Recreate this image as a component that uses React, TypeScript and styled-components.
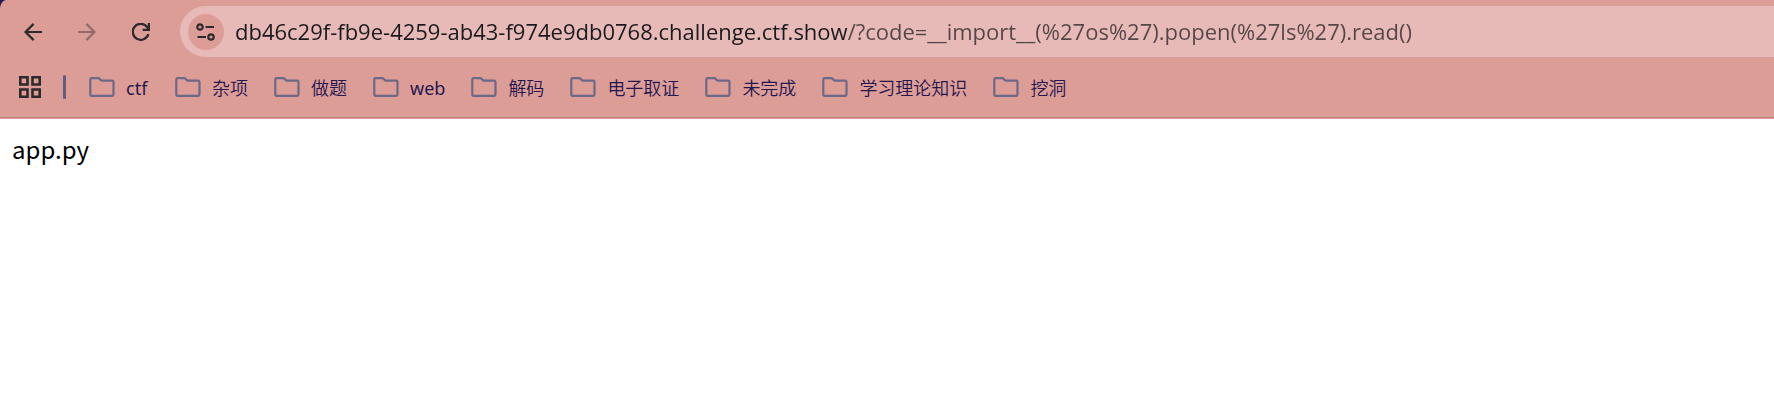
import React, { useState } from "react";
import styled, { createGlobalStyle } from "styled-components";

const GlobalStyle = createGlobalStyle`
  * { box-sizing: border-box; }
  html { background: #fff; }
  body { margin: 0; }
`;

const Frame = styled.div`
  background: #241c56;
`;

const Chrome = styled.header`
  background: #dd9d97;
  border-top-left-radius: 6px 9px;
  border-bottom: 1px solid #e09f9a;
  overflow: hidden;
`;

const Toolbar = styled.div`
  display: flex;
  align-items: center;
  padding: 6px 0 0 9px;
`;

const NavButtons = styled.nav`
  display: flex;
  gap: 6px;
  margin-right: 15px;
`;

const IconButton = styled.button`
  display: grid;
  place-items: center;
  width: 48px;
  height: 48px;
  padding: 0;
  border: 0;
  border-radius: 50%;
  background: transparent;
  color: #2c2a2d;
  &:disabled { color: #926b6a; }
`;

const AddressBar = styled.form`
  flex: 1;
  display: flex;
  align-items: center;
  gap: 11px;
  height: 51px;
  padding-left: 8px;
  border-radius: 26px 0 0 26px;
  background: #e7bab7;
`;

const SiteButton = styled(IconButton)`
  flex: none;
  width: 36px;
  height: 36px;
  background: #dd9d97;
`;

const Address = styled.input<{ $host: number }>`
  flex: 1;
  min-width: 0;
  height: 40px;
  padding: 0 0 2px;
  border: 0;
  outline: 0;
  font: 22px/30px "Open Sans", "Noto Sans CJK SC", sans-serif;
  color: transparent;
  caret-color: #1a1a1e;
  background: linear-gradient(to right, #1a1a1e ${(p) => p.$host}px, #544648 ${(p) => p.$host}px);
  background-clip: text;
  -webkit-background-clip: text;
`;

const Bookmarks = styled.nav`
  display: flex;
  align-items: center;
  height: 60px;
  padding-left: 18px;
`;

const AppsButton = styled(IconButton)`
  width: 24px;
  height: 24px;
`;

const Divider = styled.span`
  width: 3px;
  height: 24px;
  margin: 0 23px 0 21px;
  border-radius: 2px;
  background: #625b82;
`;

const FolderList = styled.div`
  display: flex;
  gap: 26px;
`;

const Folder = styled.button`
  display: flex;
  align-items: center;
  gap: 11px;
  min-width: 60px;
  padding: 0;
  border: 0;
  background: transparent;
  color: #231650;
  font: 18px/26px "Noto Sans", "Noto Sans CJK SC", sans-serif;
  white-space: nowrap;
  svg { color: #6b6888; }
  &:lang(zh) { font-weight: 350; }
`;

const FolderName = styled.span`
  padding-top: 2px;
`;

const Edge = styled.div`
  height: 1px;
  background: #bd7f7d;
`;

const Page = styled.main`
  padding: 10px 12px;
  background: #fff;
  color: #000;
  font: 24px/40px "Noto Sans CJK SC", sans-serif;
`;

const folders = [
  { name: "ctf", lang: "en" },
  { name: "杂项", lang: "zh" },
  { name: "做题", lang: "zh" },
  { name: "web", lang: "en" },
  { name: "解码", lang: "zh" },
  { name: "电子取证", lang: "zh" },
  { name: "未完成", lang: "zh" },
  { name: "学习理论知识", lang: "zh" },
  { name: "挖洞", lang: "zh" },
];

const BackIcon = () => (
  <svg width="18" height="18" viewBox="0 0 18 18" fill="none" stroke="currentColor" strokeWidth="2.2">
    <path d="M18 9H2M9.6 .9 1.5 9l8.1 8.1" />
  </svg>
);

const ForwardIcon = () => (
  <svg width="18" height="18" viewBox="0 0 18 18" fill="none" stroke="currentColor" strokeWidth="2.2">
    <path d="M0 9h16M8.4 .9 16.5 9l-8.1 8.1" />
  </svg>
);

const ReloadIcon = () => (
  <svg width="18" height="18" viewBox="0 0 18 18" fill="none" stroke="currentColor" strokeWidth="2.3">
    <path d="M16.4 11.2A8 8 0 1 1 15 3.8L16.6 6" />
    <path d="M16.9 0v6.9H10.6" />
  </svg>
);

const TuneIcon = () => (
  <svg width="20" height="18" viewBox="0 0 20 18" fill="none" stroke="currentColor" strokeWidth="2.2">
    <circle cx="4" cy="4" r="2.7" />
    <path d="M9.5 4H18M1.5 14H10" />
    <circle cx="15" cy="14" r="2.7" />
  </svg>
);

const AppsIcon = () => (
  <svg width="22" height="22" viewBox="0 0 22 22" fill="none" stroke="currentColor" strokeWidth="2.6">
    <path d="M1.3 1.3h7.2v7.2H1.3zM13.5 1.3h7.2v7.2h-7.2zM1.3 13.5h7.2v7.2H1.3zM13.5 13.5h7.2v7.2h-7.2z" />
  </svg>
);

const FolderIcon = () => (
  <svg width="26" height="22" viewBox="0 0 26 22" fill="none" stroke="currentColor" strokeWidth="2.2" strokeLinejoin="round">
    <path d="M2.6 2.1H9.6L12.6 4.6H23.2Q24.5 4.6 24.5 5.9V18.6Q24.5 19.9 23.2 19.9H2.6Q1.3 19.9 1.3 18.6V3.4Q1.3 2.1 2.6 2.1Z" />
  </svg>
);

export default function App() {
  const [url, setUrl] = useState(
    "db46c29f-fb9e-4259-ab43-f974e9db0768.challenge.ctf.show/?code=__import__(%27os%27).popen(%27ls%27).read()"
  );
  return (
    <>
      <GlobalStyle />
      <Frame>
        <Chrome>
          <Toolbar>
            <NavButtons aria-label="History">
              <IconButton type="button" aria-label="Back"><BackIcon /></IconButton>
              <IconButton type="button" aria-label="Forward" disabled><ForwardIcon /></IconButton>
              <IconButton type="button" aria-label="Reload"><ReloadIcon /></IconButton>
            </NavButtons>
            <AddressBar onSubmit={(e) => e.preventDefault()}>
              <SiteButton type="button" aria-label="View site information"><TuneIcon /></SiteButton>
              <Address
                aria-label="Address"
                spellCheck={false}
                $host={612}
                value={url}
                onChange={(e) => setUrl(e.target.value)}
              />
            </AddressBar>
          </Toolbar>
          <Bookmarks aria-label="Bookmarks">
            <AppsButton type="button" aria-label="Apps"><AppsIcon /></AppsButton>
            <Divider />
            <FolderList>
              {folders.map(({ name, lang }) => (
                <Folder type="button" lang={lang} key={name}><FolderIcon /><FolderName>{name}</FolderName></Folder>
              ))}
            </FolderList>
          </Bookmarks>
          <Edge />
        </Chrome>
      </Frame>
      <Page>app.py</Page>
    </>
  );
}
